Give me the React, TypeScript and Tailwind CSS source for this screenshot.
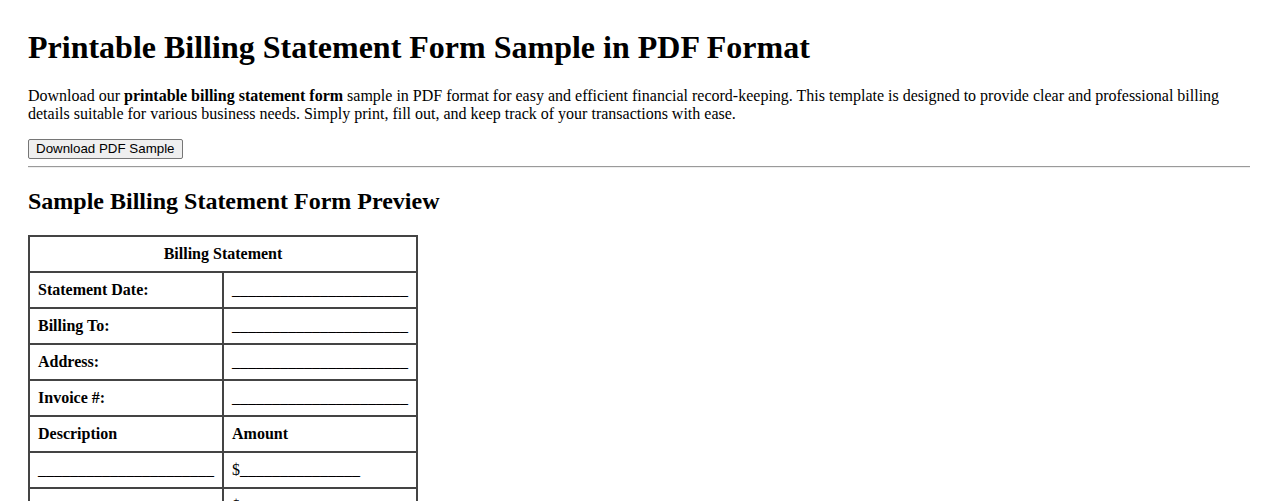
export default function App() {
  const infoRows = ['Statement Date:', 'Billing To:', 'Address:', 'Invoice #:']
  const blank = '______________________'
  const amount = '$_______________'
  const itemRows = [1, 2, 3]
  const totals = ['Subtotal:', 'Tax:', 'Total Due:']

  return (
    <div className="bg-white text-black px-[28px] pt-2 pb-8 font-['Liberation_Serif','Times_New_Roman',serif] text-[16px] leading-[normal]">
      <h1 className="mt-[21.44px] mb-[20.5px] text-[32px] font-bold leading-[normal]">
        Printable Billing Statement Form Sample in PDF Format
      </h1>
      <p className="mb-4 leading-[18px]">
        Download our <strong>printable billing statement form</strong> sample in PDF format for easy and efficient financial
        record-keeping. This template is designed to provide clear and professional billing details suitable for various
        business needs. Simply print, fill out, and keep track of your transactions with ease.
      </p>
      <button className="h-[20px] px-[7px] bg-[#efefef] border border-[#767676] rounded-[2px] text-[13.33px] leading-[16px] font-['Liberation_Sans',Arial,sans-serif] text-black">
        Download PDF Sample
      </button>
      <hr className="mt-[7.5px] h-0 border-0 border-t border-t-[#9a9a9a] border-b border-b-[#eeeeee]" />
      <h2 className="mt-[19.92px] mb-[19.92px] text-[24px] font-bold leading-[normal]">
        Sample Billing Statement Form Preview
      </h2>
      <table className="border-collapse border-2 border-[#444]">
        <tbody>
          <tr>
            <th colSpan={2} className="border-2 border-[#444] p-2 leading-[18px] text-center font-bold">
              Billing Statement
            </th>
          </tr>
          {infoRows.map((label) => (
            <tr key={label}>
              <td className="border-2 border-[#444] p-2 leading-[18px] text-left">
                <strong>{label}</strong>
              </td>
              <td className="border-2 border-[#444] p-2 leading-[18px]">{blank}</td>
            </tr>
          ))}
          <tr>
            <td className="border-2 border-[#444] p-2 leading-[18px]">
              <strong>Description</strong>
            </td>
            <td className="border-2 border-[#444] p-2 leading-[18px]">
              <strong>Amount</strong>
            </td>
          </tr>
          {itemRows.map((n) => (
            <tr key={n}>
              <td className="border-2 border-[#444] p-2 leading-[18px]">{blank}</td>
              <td className="border-2 border-[#444] p-2 leading-[18px]">{amount}</td>
            </tr>
          ))}
          {totals.map((label) => (
            <tr key={label}>
              <td className="border-2 border-[#444] p-2 leading-[18px]">
                <strong>{label}</strong>
              </td>
              <td className="border-2 border-[#444] p-2 leading-[18px]">{amount}</td>
            </tr>
          ))}
        </tbody>
      </table>
    </div>
  )
}
